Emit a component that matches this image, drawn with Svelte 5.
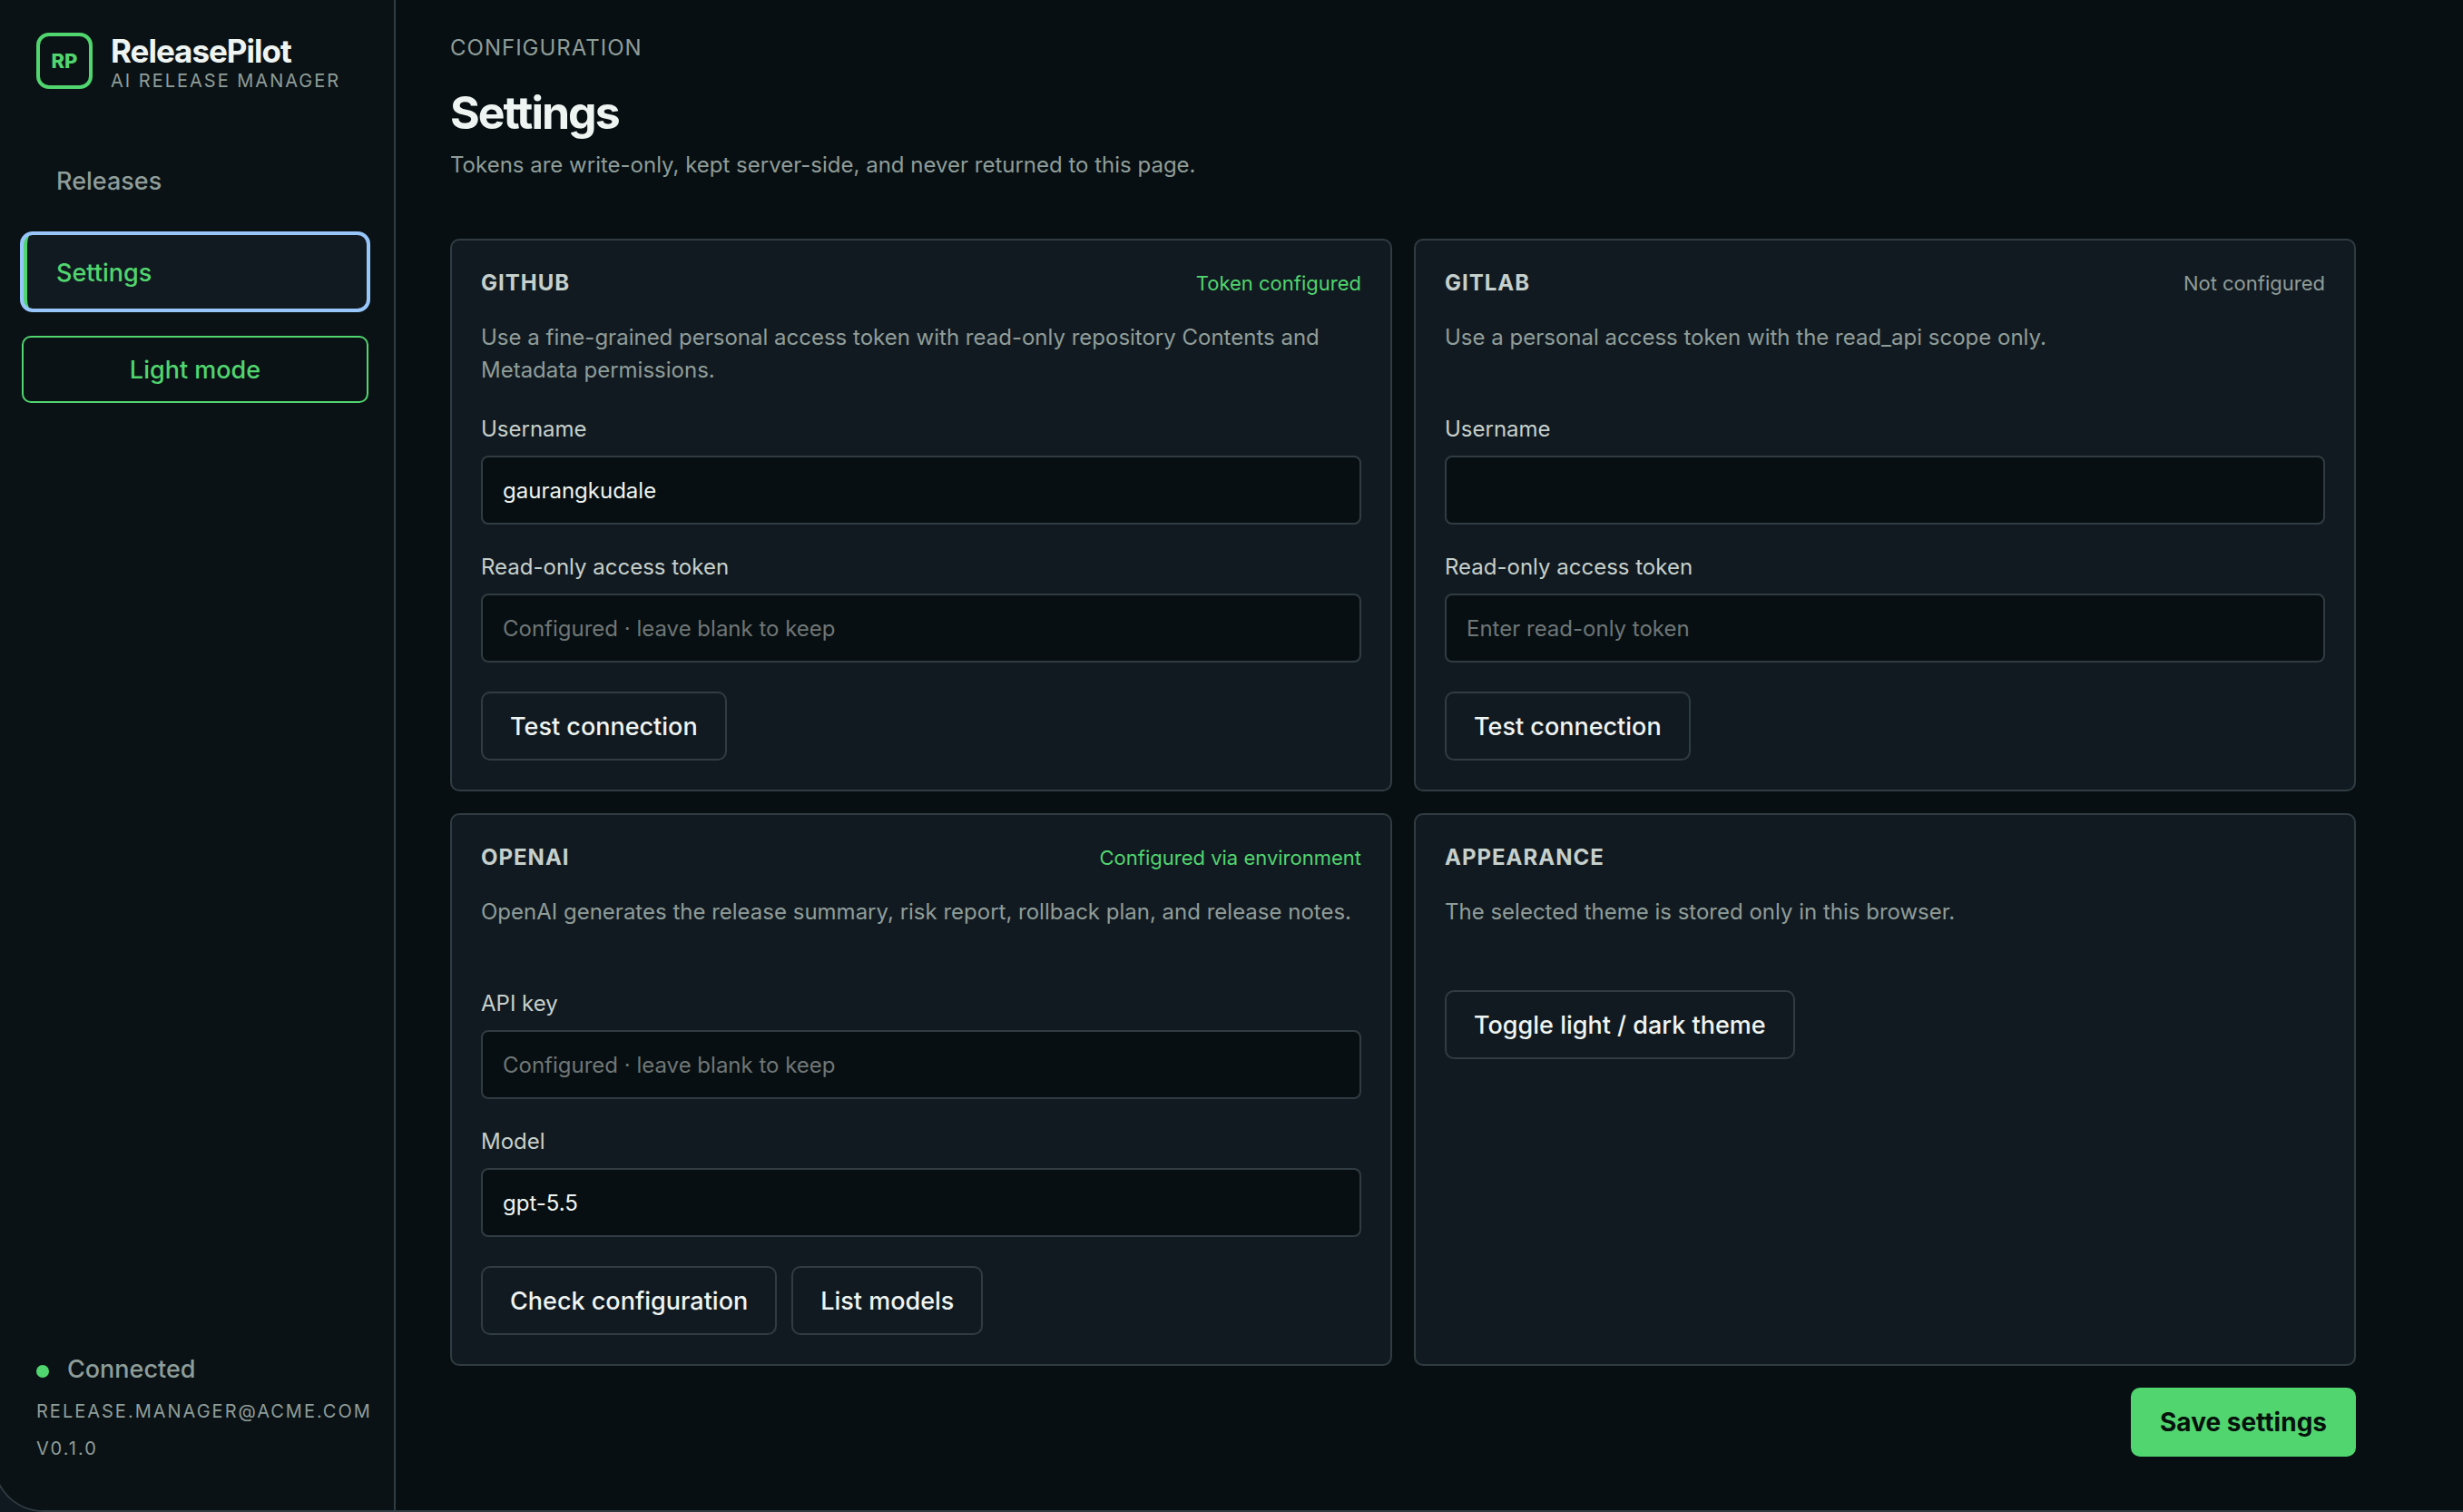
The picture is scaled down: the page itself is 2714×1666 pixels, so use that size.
<script>
    let light = false;
    let githubUser = 'gaurangkudale';
    let gitlabUser = '';
    let model = 'gpt-5.5';

    function toggleTheme() {
        light = !light;
    }
</script>

<div class="shell" class:light>
    <aside class="sidebar">
        <div class="brand">
            <span class="mark">RP</span>
            <div class="brand-text">
                <strong>ReleasePilot</strong>
                <span class="caps">AI Release Manager</span>
            </div>
        </div>

        <nav class="nav">
            <a href="#releases" class="nav-link">Releases</a>
            <a href="#settings" class="nav-link active" aria-current="page">Settings</a>
        </nav>

        <button type="button" class="theme-btn" on:click={toggleTheme}>
            {light ? 'Dark mode' : 'Light mode'}
        </button>

        <div class="account">
            <span class="status"><i class="dot"></i>Connected</span>
            <span class="caps">release.manager@acme.com</span>
            <span class="caps">v0.1.0</span>
        </div>
    </aside>

    <main class="main">
        <header class="page-header">
            <p class="eyebrow">Configuration</p>
            <h1>Settings</h1>
            <p class="lead">Tokens are write-only, kept server-side, and never returned to this page.</p>
        </header>

        <form on:submit|preventDefault>
            <div class="cards">
                <section class="card">
                    <div class="card-head">
                        <h2>GitHub</h2>
                        <span class="state ok">Token configured</span>
                    </div>
                    <p class="desc">Use a fine-grained personal access token with read-only repository Contents and Metadata permissions.</p>
                    <label for="github-user">Username</label>
                    <input id="github-user" type="text" bind:value={githubUser} />
                    <label for="github-token">Read-only access token</label>
                    <input id="github-token" type="password" placeholder="Configured · leave blank to keep" />
                    <div class="actions">
                        <button type="button" class="btn">Test connection</button>
                    </div>
                </section>

                <section class="card">
                    <div class="card-head">
                        <h2>GitLab</h2>
                        <span class="state">Not configured</span>
                    </div>
                    <p class="desc">Use a personal access token with the read_api scope only.</p>
                    <label for="gitlab-user">Username</label>
                    <input id="gitlab-user" type="text" bind:value={gitlabUser} />
                    <label for="gitlab-token">Read-only access token</label>
                    <input id="gitlab-token" type="password" placeholder="Enter read-only token" />
                    <div class="actions">
                        <button type="button" class="btn">Test connection</button>
                    </div>
                </section>

                <section class="card">
                    <div class="card-head">
                        <h2>OpenAI</h2>
                        <span class="state ok">Configured via environment</span>
                    </div>
                    <p class="desc">OpenAI generates the release summary, risk report, rollback plan, and release notes.</p>
                    <label for="openai-key">API key</label>
                    <input id="openai-key" type="password" placeholder="Configured · leave blank to keep" />
                    <label for="openai-model">Model</label>
                    <input id="openai-model" type="text" bind:value={model} />
                    <div class="actions">
                        <button type="button" class="btn">Check configuration</button>
                        <button type="button" class="btn">List models</button>
                    </div>
                </section>

                <section class="card">
                    <div class="card-head">
                        <h2>Appearance</h2>
                    </div>
                    <p class="desc">The selected theme is stored only in this browser.</p>
                    <div class="actions">
                        <button type="button" class="btn" on:click={toggleTheme}>Toggle light / dark theme</button>
                    </div>
                </section>
            </div>

            <div class="form-footer">
                <button type="submit" class="btn save">Save settings</button>
            </div>
        </form>
    </main>
</div>

<style>
    :global(body) {
        overflow-x: hidden;
        background: #10191f;
    }

    .shell {
        --bg: #070f12;
        --side: #0a1215;
        --panel: #121a21;
        --line: #303c42;
        --text: #eef4f1;
        --soft: #c5d0cc;
        --muted: #8f9d99;
        --green: #51d56f;

        display: flex;
        min-height: 100vh;
        /* left border bleeds off the window, only the rounded corner shows */
        margin-left: -8px;
        overflow: hidden;
        border: 2px solid var(--line);
        border-width: 0 0 2px 2px;
        border-bottom-left-radius: 56px;
        background: var(--bg);
        color: var(--text);
        font-family: Inter, 'Liberation Sans', sans-serif;
        font-size: 24px;
    }

    .shell.light {
        --bg: #f5f8f7;
        --side: #eaf0ee;
        --panel: #ffffff;
        --line: #c8d2ce;
        --text: #10191f;
        --soft: #2c3935;
        --muted: #5c6a66;
        --green: #1f9a40;
    }

    .shell *,
    .shell { box-sizing: border-box; }

    h1, h2, p { margin: 0; }

    button, input { font-family: inherit; }

    button { cursor: pointer; }

    .caps {
        color: var(--muted);
        font-size: 20px;
        line-height: 24px;
        letter-spacing: 2px;
        text-transform: uppercase;
        white-space: nowrap;
    }

    /* --- Sidebar --- */
    .sidebar {
        display: flex;
        flex-direction: column;
        flex: none;
        width: 442px;
        padding: 36px 28px 56px 30px;
        border-right: 2px solid var(--line);
        background: var(--side);
    }

    .brand {
        display: flex;
        align-items: flex-start;
        gap: 20px;
        padding-left: 16px;
    }

    .mark {
        display: grid;
        place-items: center;
        width: 62px;
        height: 62px;
        border: 4px solid var(--green);
        border-radius: 14px;
        color: var(--green);
        font-size: 22px;
        font-weight: 800;
    }

    .brand-text {
        display: flex;
        flex-direction: column;
        gap: 1px;
    }

    .brand-text strong {
        font-size: 35px;
        line-height: 40px;
        letter-spacing: -1px;
    }

    .nav {
        display: flex;
        flex-direction: column;
        gap: 16px;
        margin-top: 55px;
    }

    .nav-link,
    .theme-btn,
    .status {
        font-size: 27px;
        font-weight: 500;
        line-height: 35px;
    }

    .nav-link {
        padding: 26px 32px 24px;
        border-left: 6px solid transparent;
        border-radius: 12px;
        color: var(--muted);
        text-decoration: none;
    }

    .nav-link.active {
        border-left-color: var(--green);
        background: var(--panel);
        color: var(--green);
        outline: 4px solid #98c6fb;
        outline-offset: -2px;
    }

    .theme-btn {
        margin-top: 28px;
        padding: 18px 17px 17px;
        border: 2px solid var(--green);
        border-radius: 10px;
        background: transparent;
        color: var(--green);
    }

    .account {
        display: flex;
        flex-direction: column;
        gap: 17px;
        margin-top: auto;
        padding-left: 16px;
    }

    .status {
        display: flex;
        align-items: baseline;
        gap: 20px;
        color: var(--muted);
    }

    .dot {
        width: 14px;
        height: 14px;
        border-radius: 50%;
        background: var(--green);
    }

    /* --- Page --- */
    .main {
        flex: 1;
        min-width: 0;
        padding: 37px 60px 58px;
    }

    .page-header { margin-bottom: 63px; }

    .eyebrow {
        color: var(--muted);
        line-height: 32px;
        letter-spacing: 1px;
        text-transform: uppercase;
    }

    h1 {
        margin-top: 25px;
        font-size: 50px;
        line-height: 60px;
        letter-spacing: -2px;
    }

    .lead {
        margin-top: 10px;
        color: var(--muted);
        line-height: 36px;
    }

    form { max-width: 2100px; }

    .cards {
        display: grid;
        grid-template-columns: repeat(2, minmax(0, 1fr));
        gap: 24px;
    }

    .card {
        display: flex;
        flex-direction: column;
        padding: 32px;
        border: 2px solid var(--line);
        border-radius: 10px;
        background: var(--panel);
    }

    .card-head {
        display: flex;
        align-items: center;
        justify-content: space-between;
        height: 30px;
        margin-bottom: 27px;
    }

    h2 {
        color: var(--soft);
        font-size: 24px;
        line-height: 30px;
        letter-spacing: 1px;
        text-transform: uppercase;
    }

    .state {
        color: var(--muted);
        font-size: 22px;
    }

    .state.ok { color: var(--green); }

    .desc {
        min-height: 72px;
        color: var(--muted);
        line-height: 36px;
    }

    label {
        margin: 32px 0 14px;
        color: var(--soft);
        line-height: 30px;
    }

    input {
        width: 100%;
        height: 76px;
        padding: 0 22px;
        border: 2px solid var(--line);
        border-radius: 8px;
        outline: none;
        background: var(--bg);
        color: var(--text);
        font-size: 24px;
    }

    input::placeholder {
        color: #6f7676;
        opacity: 1;
    }

    .actions {
        display: flex;
        gap: 16px;
        margin-top: 32px;
    }

    .btn {
        padding: 20px 30px 19px;
        border: 2px solid var(--line);
        border-radius: 10px;
        background: transparent;
        color: var(--text);
        font-size: 27px;
        font-weight: 500;
        line-height: 33px;
    }

    .form-footer {
        display: flex;
        justify-content: flex-end;
        margin-top: 24px;
    }

    .save {
        border-color: var(--green);
        background: var(--green);
        color: #07110c;
        font-size: 28px;
        font-weight: 700;
    }

    @media (max-width: 1300px) {
        .cards { grid-template-columns: 1fr; }
    }
</style>
